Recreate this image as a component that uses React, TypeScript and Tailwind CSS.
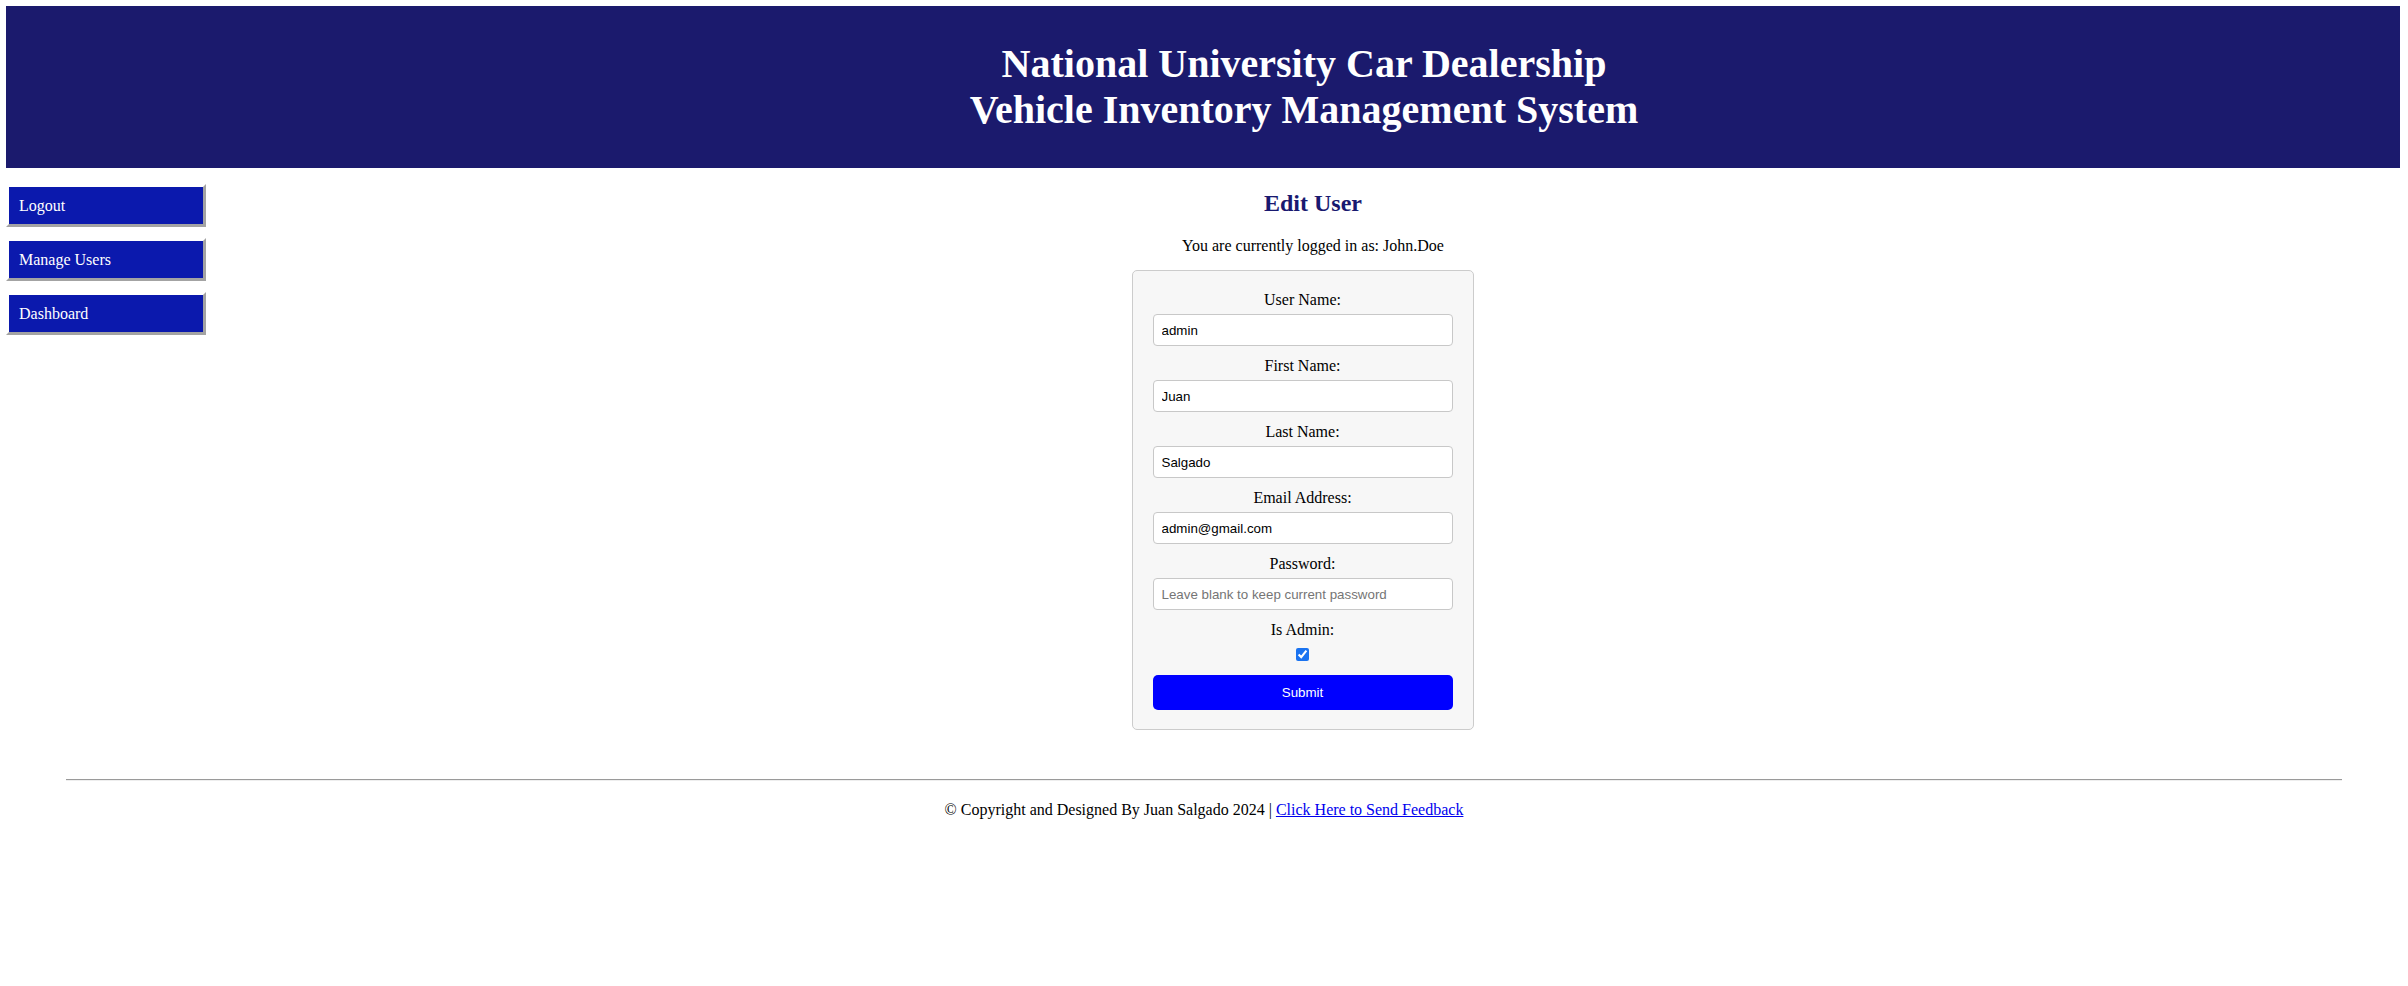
import React from "react";

const navItems = ["Logout", "Manage Users", "Dashboard"];

const fields: { label: string; value?: string; placeholder?: string; type?: string }[] = [
  { label: "User Name:", value: "admin" },
  { label: "First Name:", value: "Juan" },
  { label: "Last Name:", value: "Salgado" },
  { label: "Email Address:", value: "admin@gmail.com", type: "email" },
  { label: "Password:", placeholder: "Leave blank to keep current password", type: "password" },
];

export default function App() {
  return (
    <div className="min-h-screen bg-white text-black font-['Liberation_Serif','Times_New_Roman',serif]">
      <header className="mt-[6px] ml-[6px] mr-[8px] h-[162px] bg-[#1b1a6d] flex items-center justify-center pl-[202px]">
        <h1 className="text-center text-white font-bold text-[40px] leading-[46px]">
          National University Car Dealership
          <br />
          Vehicle Inventory Management System
        </h1>
      </header>

      <div className="flex ml-[6px]">
        <nav className="w-[200px] shrink-0 pt-[16px] flex flex-col gap-[11px]">
          {navItems.map((item) => (
            <a
              key={item}
              href="#"
              className="block bg-[#0b19ad] text-white text-[16px] leading-[19px] py-[9px] px-[10px] border-[3px] border-t-white border-l-white border-b-[#a3a3a3] border-r-[#a3a3a3]"
            >
              {item}
            </a>
          ))}
        </nav>

        <main className="flex-1 pl-[12px] text-center">
          <h2 className="mt-[21px] text-[24px] leading-[28px] font-bold text-[#191970]">Edit User</h2>
          <p className="mt-[20px] text-[16px] leading-[18px]">You are currently logged in as: John.Doe</p>
          <div className="flex justify-center mt-[15px]">
            <form
              className="mr-[21px] w-[342px] bg-[#f7f7f7] border border-[#cccccc] rounded-[5px] px-[20px] pt-[20px] pb-[19px] text-center"
              onSubmit={(e) => e.preventDefault()}
            >
              {fields.map((f) => (
                <div key={f.label}>
                  <label className="block text-[16px] leading-[18.4px] mb-[5px]">{f.label}</label>
                  <input
                    type={f.type ?? "text"}
                    defaultValue={f.value}
                    placeholder={f.placeholder}
                    className="block w-[300px] h-[32px] mb-[10.6px] px-[8px] bg-white border border-[#c8c8c8] rounded-[4px] text-[13.33px] text-black placeholder:text-[#757575] font-['Liberation_Sans',Arial,sans-serif] outline-none"
                  />
                </div>
              ))}
              <label className="block text-[16px] leading-[18.4px] mb-[5px]">Is Admin:</label>
              <input
                type="checkbox"
                defaultChecked
                className="block mx-auto mt-[9px] mb-[3px] w-[13px] h-[13px] accent-[#1a73f0]"
              />
              <button
                type="submit"
                className="block w-[300px] h-[35px] mt-[14px] bg-[#0000ff] text-white rounded-[5px] text-[13.33px] font-['Liberation_Sans',Arial,sans-serif]"
              >
                Submit
              </button>
            </form>
          </div>
        </main>
      </div>

      <hr className="mt-[49px] mx-auto w-[2276px] h-0 border-t border-t-[#9a9a9a] border-b border-b-[#eeeeee]" />
      <footer className="mt-[20px] text-center text-[16px] leading-[18px]">
        © Copyright and Designed By Juan Salgado 2024 |{" "}
        <a href="#" className="text-[#0000ee] underline">
          Click Here to Send Feedback
        </a>
      </footer>
    </div>
  );
}
